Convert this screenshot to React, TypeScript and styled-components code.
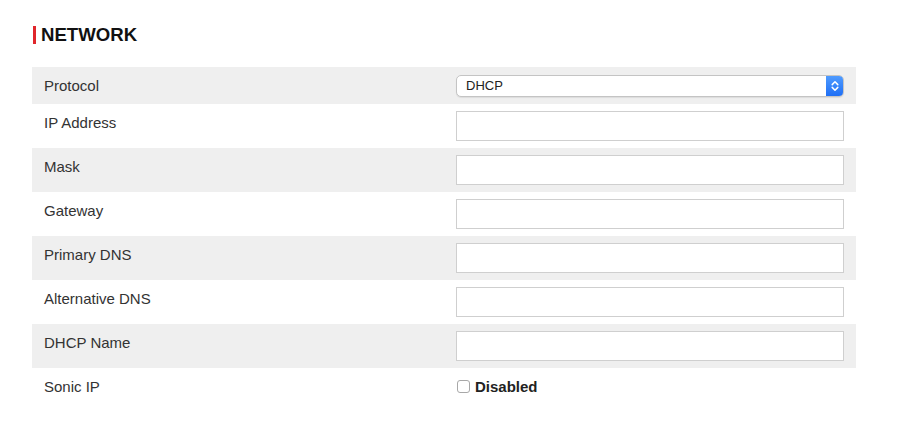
import styled, { createGlobalStyle } from "styled-components";

const GlobalStyle = createGlobalStyle`
  body {
    margin: 0;
    background: #fff;
    font-family: "Liberation Sans", Arial, Helvetica, sans-serif;
    color: #333;
  }
`;

const fields = [
  "IP Address",
  "Mask",
  "Gateway",
  "Primary DNS",
  "Alternative DNS",
  "DHCP Name",
];

export default function App() {
  return (
    <Page>
      <GlobalStyle />
      <Title>NETWORK</Title>
      <Table>
        <tbody>
          <Row $shaded $compact>
            <Label>Protocol</Label>
            <Cell>
              <SelectBox>
                <Select defaultValue="dhcp">
                  <option value="dhcp">DHCP</option>
                  <option value="static">Static</option>
                </Select>
                <Stepper>
                  <svg width="8" height="12" viewBox="0 0 8 12">
                    <path
                      d="M1.2 4.6 L4 1.8 L6.8 4.6 M1.2 7.4 L4 10.2 L6.8 7.4"
                      fill="none"
                      stroke="#fff"
                      strokeWidth="1.5"
                      strokeLinecap="round"
                      strokeLinejoin="round"
                    />
                  </svg>
                </Stepper>
              </SelectBox>
            </Cell>
          </Row>
          {fields.map((name, i) => (
            <Row key={name} $shaded={i % 2 === 1}>
              <Label>{name}</Label>
              <Cell>
                <TextInput type="text" />
              </Cell>
            </Row>
          ))}
          <Row $compact>
            <Label>Sonic IP</Label>
            <Cell>
              <CheckLabel>
                <CheckBox type="checkbox" />
                Disabled
              </CheckLabel>
            </Cell>
          </Row>
        </tbody>
      </Table>
    </Page>
  );
}

const Page = styled.div`
  padding: 26px 32px 0 32px;
  width: 824px;
`;

const Title = styled.h2`
  margin: 0 0 23px 1px;
  padding-left: 5px;
  border-left: 3px solid #e0262b;
  font-size: 18.6px;
  line-height: 18px;
  font-weight: bold;
  color: #111;
`;

const Table = styled.table`
  width: 824px;
  border-collapse: collapse;
  table-layout: fixed;
`;

const Row = styled.tr<{ $shaded?: boolean; $compact?: boolean }>`
  background: ${(p) => (p.$shaded ? "#efefef" : "#fff")};
  height: ${(p) => (p.$compact ? "37px" : "44px")};
`;

const Label = styled.td`
  width: 388px;
  padding: 10px 12px 0 12px;
  font-size: 15px;
  line-height: 17px;
  color: #333;
  vertical-align: top;
`;

const Cell = styled.td`
  padding: 0 12px;
  vertical-align: middle;
`;

const TextInput = styled.input`
  display: block;
  box-sizing: border-box;
  width: 388px;
  height: 30px;
  margin: 0;
  border: 1px solid #cfcfcf;
  background: #fff;
  outline: none;
`;

const SelectBox = styled.div`
  display: flex;
  width: 388px;
  height: 22px;
  box-sizing: border-box;
  border: 1px solid #c4c4c4;
  border-radius: 5px;
  background: #fff;
  overflow: hidden;
  box-shadow: 0 1px 1px rgba(0, 0, 0, 0.08);
`;

const Select = styled.select`
  flex: 1;
  appearance: none;
  border: none;
  background: transparent;
  padding: 0 0 0 9px;
  margin: 0;
  font-family: "Liberation Sans", Arial, sans-serif;
  font-size: 13px;
  color: #222;
  outline: none;
`;

const Stepper = styled.span`
  display: flex;
  align-items: center;
  justify-content: center;
  width: 17px;
  background: linear-gradient(#4f9bff, #1f6ff5);
`;

const CheckLabel = styled.label`
  display: flex;
  align-items: center;
  gap: 5px;
  font-size: 15px;
  font-weight: bold;
  color: #222;
`;

const CheckBox = styled.input`
  appearance: none;
  width: 13px;
  height: 13px;
  margin: 0 0 0 1px;
  border: 1px solid #a8a8a8;
  border-radius: 3px;
  background: #fff;
`;
